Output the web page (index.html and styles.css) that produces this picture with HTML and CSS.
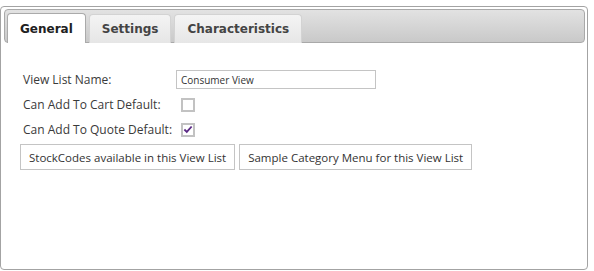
FILE: index.html
```html
<!DOCTYPE html>
<html lang="en">
<head>
<meta charset="UTF-8">
<title>View List</title>
<link rel="stylesheet" href="styles.css">
</head>
<body>

<div class="tabs">
  <ul class="tab-nav">
    <li class="tab active">General</li>
    <li class="tab">Settings</li>
    <li class="tab">Characteristics</li>
  </ul>

  <div class="tab-panel">
    <div class="field">
      <label>View List Name:</label>
      <input type="text" class="text-input" value="Consumer View">
    </div>
    <div class="field">
      <label>Can Add To Cart Default:</label>
      <span class="check"></span>
    </div>
    <div class="field">
      <label>Can Add To Quote Default:</label>
      <span class="check checked">
        <svg width="11" height="9" viewBox="0 0 11 9"><path d="M1.5 4.5 L4.2 7.2 L9.5 1.2" fill="none" stroke="#5b2a86" stroke-width="2"/></svg>
      </span>
    </div>
    <div class="actions">
      <button class="btn">StockCodes available in this View List</button>
      <button class="btn">Sample Category Menu for this View List</button>
    </div>
  </div>
</div>

<div class="peek">
  <span class="peek-a"></span>
  <span class="peek-b"></span>
</div>

</body>
</html>
```

FILE: styles.css
```css
* { margin: 0; padding: 0; box-sizing: border-box; }

body {
  font-family: "Open Sans", "Liberation Sans", sans-serif;
  background: #fff;
  color: #222;
  padding: 6px 6px 0 0;
  width: 594px;
  height: 271px;
  overflow: hidden;
}

.tabs {
  height: 264px;
  border: 1px solid #a3a3a3;
  border-radius: 4px;
  padding: 2px 2px 0 3px;
  display: flex;
  flex-direction: column;
}

.tab-nav {
  list-style: none;
  display: flex;
  align-items: flex-end;
  gap: 3px;
  height: 34px;
  padding: 0 0 0 2px;
  border: 1px solid #a9a9a9;
  border-radius: 4px;
  background: linear-gradient(#e2e2e2, #c9c9c9);
}

.tab {
  font-family: "DejaVu Sans", Verdana, sans-serif;
  font-weight: bold;
  font-size: 12px;
  color: #444;
  height: 29px;
  margin-bottom: -1px;
  padding: 0 12px;
  display: flex;
  align-items: center;
  border: 1px solid #d3d3d3;
  border-bottom: none;
  border-radius: 4px 4px 0 0;
  background: linear-gradient(#f4f4f4, #e6e6e6);
}

.tab.active {
  color: #212121;
  background: #fff;
  border-color: #aaa;
  height: 30px;
}

.tab-panel {
  flex: 1;
  padding: 24px 0 0 19px;
}

.field {
  display: flex;
  align-items: center;
  height: 25px;
}

.field label {
  width: 153px;
  flex-shrink: 0;
  white-space: nowrap;
  font-size: 12px;
  color: #3a3a3a;
}

.text-input {
  width: 200px;
  height: 19px;
  border: 1px solid #c4c4c4;
  padding: 0 4px;
  font-family: "Open Sans", sans-serif;
  font-size: 10px;
  color: #333;
  outline: none;
}

.check {
  width: 14px;
  height: 14px;
  margin-left: 5px;
  border: 2px solid #c2c2c2;
  display: flex;
  align-items: center;
  justify-content: center;
}

.actions {
  display: flex;
  gap: 4px;
  margin: 2px 0 0 -3px;
}

.btn {
  height: 26px;
  padding: 0 8px;
  background: #fff;
  border: 1px solid #c4c4c4;
  font-family: "Open Sans", sans-serif;
  font-size: 11.5px;
  color: #333;
}

.peek {
  display: flex;
  gap: 18px;
  padding-left: 440px;
  margin-top: 1px;
}

.peek span { height: 2px; background: #c8c8c8; }
.peek-a { width: 46px; }
.peek-b { width: 55px; }
```
